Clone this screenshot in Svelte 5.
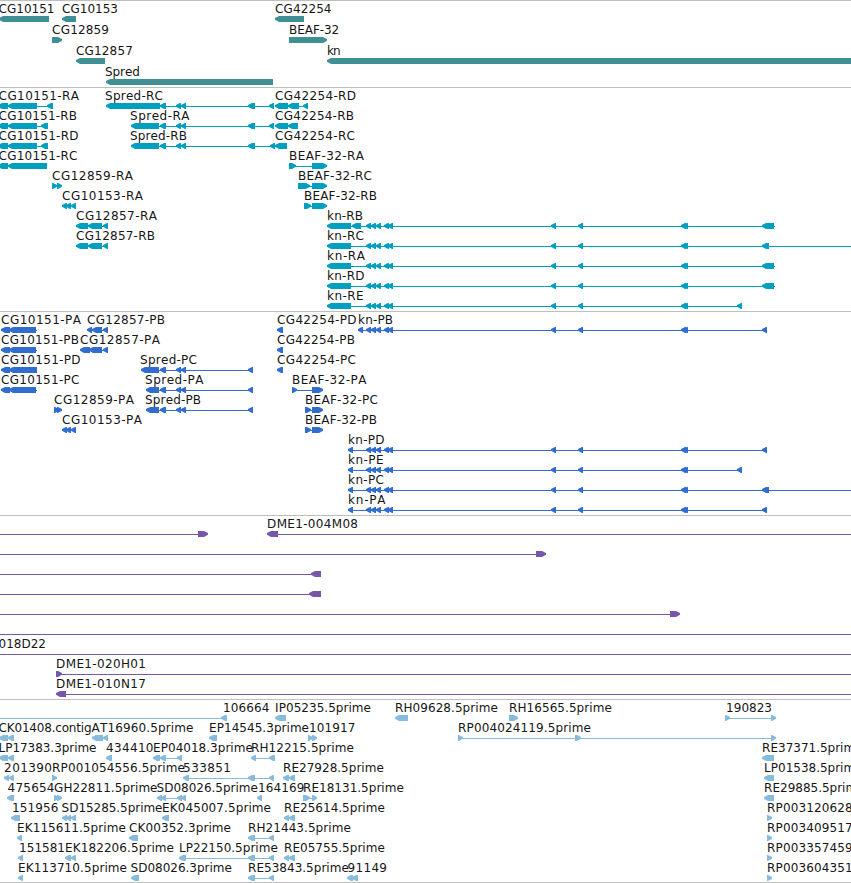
<script>
  // Label: [text, left, right]. Box: [left, right]. Dir: -1 points left, 1 points right.
  const item = (row, label, dir, boxes, line) => ({ row, label, dir, boxes, line });

  const pair = [[176, 181], [181, 186]];
  const cluster = [[366, 371], [371, 376], [376, 381], [384, 389], [388, 393]];
  const far = [[551, 556], [578, 583], [681, 686], [683, 688]];
  const tri = [[62, 67], [66, 71], [71, 76]];

  const genes = [
    item(0, ['CG10151', -1, 54], -1, [[-1, 49]]),
    item(0, ['CG10153', 62.5, 117.5], -1, [[62, 76]]),
    item(0, ['CG42254', 275.5, 331], -1, [[275, 304]]),
    item(1, ['CG12859', 52.5, 108.5], 1, [[52, 62]]),
    item(1, ['BEAF-32', 289.5, 338.7], 1, [[289, 327]]),
    item(2, ['CG12857', 76.5, 132.3], -1, [[76, 105]]),
    item(2, ['kn', 327.5, 340], -1, [[327, 860]]),
    item(3, ['Spred', 105.5, 139.3], -1, [[106, 273]])
  ];

  const knR = (row, name, end, last, lineEnd, extra = []) =>
    item(row, [name, 327.5, end], -1, [[327, 351], ...extra, ...cluster, ...far, last], [340, lineEnd]);

  const transcripts = [
    item(0, ['CG10151-RA', -1, 78.5], -1, [[-2, 8], [8, 37], [47, 53]], [0, 53]),
    item(0, ['Spred-RC', 105.5, 162.5], -1, [[106, 160], [160, 166], ...pair, [248, 255], [269, 274]], [150, 274]),
    item(0, ['CG42254-RD', 275.5, 355.5], -1, [[275, 288], [288, 299], [303, 308]], [280, 308]),
    item(1, ['CG10151-RB', -1, 76.5], -1, [[-2, 8], [8, 37], [41, 48]], [0, 48]),
    item(1, ['Spred-RA', 130.5, 189], -1, [[131, 159], [160, 166], ...pair, [248, 255], [269, 274]], [150, 274]),
    item(1, ['CG42254-RB', 275.5, 353.5], -1, [[275, 288], [288, 298]]),
    item(2, ['CG10151-RD', -1, 78], -1, [[-2, 8], [8, 37], [41, 48]], [0, 48]),
    item(2, ['Spred-RB', 130.5, 186.5], -1, [[131, 159], [160, 166], ...pair, [248, 255], [270, 275]], [150, 276]),
    item(2, ['CG42254-RC', 275.5, 354.5], -1, [[275, 287]]),
    item(3, ['CG10151-RC', -1, 77], -1, [[-2, 8], [8, 47]]),
    item(3, ['BEAF-32-RA', 289.5, 363.5], 1, [[289, 296], [312, 327]], [290, 320]),
    item(4, ['CG12859-RA', 52.5, 132.5], 1, [[52, 57], [57, 62]]),
    item(4, ['BEAF-32-RC', 298.5, 371.5], 1, [[298, 310], [312, 327]], [300, 320]),
    item(5, ['CG10153-RA', 62.5, 142.5], -1, tri),
    item(5, ['BEAF-32-RB', 304.5, 376.5], 1, [[304, 311], [312, 327]], [306, 320]),
    item(6, ['CG12857-RA', 76.5, 156.5], -1, [[76, 88], [88, 102], [103, 108]], [80, 107]),
    knR(6, 'kn-RB', 362.5, [762, 774], 775, [[352, 361]]),
    item(7, ['CG12857-RB', 76.5, 154.5], -1, [[76, 88], [88, 102], [103, 108]], [80, 107]),
    knR(7, 'kn-RC', 363.5, [762, 769], 860),
    knR(8, 'kn-RA', 364.5, [762, 774], 775),
    knR(9, 'kn-RD', 364, [762, 774], 775),
    knR(10, 'kn-RE', 363, [737, 742], 742)
  ];

  const knP = (row, name, end, last, lineEnd) =>
    item(row, [name, 348.5, end], -1, [[348, 353], ...cluster, ...far, last], [350, lineEnd]);

  const proteins = [
    item(0, ['CG10151-PA', 1.5, 80.5], -1, [[1, 10], [9, 36]], [5, 37]),
    item(0, ['CG12857-PB', 87.5, 164.5], -1, [[87, 92], [92, 102], [103, 108]], [90, 107]),
    item(0, ['CG42254-PD', 277.5, 356], -1, [[277, 283]]),
    item(0, ['kn-PB', 358.5, 392.5], -1, [[358, 363], ...cluster, ...far, [762, 767]], [360, 767]),
    item(1, ['CG10151-PB', 1.5, 78.5], -1, [[1, 10], [9, 36]], [5, 37]),
    item(1, ['CG12857-PA', 80.5, 159.5], -1, [[80, 90], [89, 102], [103, 108]], [84, 107]),
    item(1, ['CG42254-PB', 277.5, 354.5], -1, [[277, 283]]),
    item(2, ['CG10151-PD', 1.5, 80], -1, [[1, 10], [9, 37]], [5, 37]),
    item(2, ['Spred-PC', 140.5, 196.5], -1, [[141, 159], [160, 166], ...pair, [248, 253]], [150, 253]),
    item(2, ['CG42254-PC', 277.5, 355.5], -1, [[277, 283]]),
    item(3, ['CG10151-PC', 1.5, 79], -1, [[1, 10], [9, 36]], [5, 37]),
    item(3, ['Spred-PA', 145.5, 203], -1, [[146, 159], [160, 166], ...pair, [248, 253]], [150, 253]),
    item(3, ['BEAF-32-PA', 292.5, 366], 1, [[292, 297], [312, 323]], [293, 318]),
    item(4, ['CG12859-PA', 54.5, 133.5], 1, [[54, 59], [57, 62]]),
    item(4, ['Spred-PB', 145.5, 200.5], -1, [[146, 159], [160, 166], ...pair, [248, 253]], [150, 253]),
    item(4, ['BEAF-32-PC', 305.5, 377.5], 1, [[305, 311], [312, 323]], [306, 318]),
    item(5, ['CG10153-PA', 62.5, 141.5], -1, tri),
    item(5, ['BEAF-32-PB', 305.5, 376.5], 1, [[305, 311], [312, 323]], [306, 318]),
    knP(6, 'kn-PD', 384, [762, 767], 767),
    knP(7, 'kn-PE', 383, [737, 742], 742),
    knP(8, 'kn-PC', 383.5, [762, 769], 860),
    knP(9, 'kn-PA', 385, [762, 767], 767)
  ];

  const clones = [
    item(0, null, 1, [[198, 208]], [0, 200]),
    item(0, ['DME1-004M08', 267.5, 357.5], -1, [[267, 278]], [275, 860]),
    item(1, null, 1, [[536, 546]], [0, 538]),
    item(2, null, -1, [[311, 321]], [0, 320]),
    item(3, null, -1, [[309, 321]], [0, 320]),
    item(4, null, 1, [[670, 680]], [0, 672]),
    item(5, null, 1, [], [0, 860]),
    item(6, ['018D22', -1, 45.5], 1, [], [0, 860]),
    item(7, ['DME1-020H01', 56.5, 145.5], 1, [[56, 62]], [57, 860]),
    item(8, ['DME1-010N17', 56.5, 145.5], -1, [[56, 66]], [60, 860])
  ];

  const ests = [
    item(0, ['106664', 223.5, 269], -1, [[221, 227]], [0, 226]),
    item(0, ['IP05235.5prime', 275.5, 370.5], -1, [[275, 286]]),
    item(0, ['RH09628.5prime', 395.5, 497.3], -1, [[395, 408]]),
    item(0, ['RH16565.5prime', 509.5, 611.3], 1, [[509, 518]]),
    item(0, ['190823', 726.5, 771.5], 1, [[725, 730], [771, 776]], [726, 774]),
    item(1, ['CK01408.contig', -1, 91], -1, [[-1, 8], [8, 14]]),
    item(1, ['AT16960.5prime', 92, 193], -1, [[92, 103], [103, 108]]),
    item(1, ['EP14545.3prime', 209.5, 308.5], -1, [[209, 217]]),
    item(1, ['101917', 309.5, 355], 1, [[308, 313], [312, 317]]),
    item(1, ['RP004024119.5prime', 458.5, 590.5], 1, [[458, 463], [575, 581], [771, 776]], [459, 774]),
    item(2, ['LP17383.3prime', -1, 96], -1, [[-1, 8], [8, 14]]),
    item(2, ['434410', 106.5, 153], -1, [[106, 112]]),
    item(2, ['EP04018.3prime', 153.5, 252.3], -1, [[153, 160], [160, 166], [177, 182]], [155, 182]),
    item(2, ['RH12215.5prime', 251.5, 353.3], -1, [[251, 256], [269, 275]], [253, 274]),
    item(2, ['RE37371.5prime', 762.5, 862], -1, [[762, 774]]),
    item(3, ['201390', 4.5, 51.5], -1, [[4, 9], [9, 14]]),
    item(3, ['RP001054556.5prime', 52.5, 184.5], 1, [[52, 57]]),
    item(3, ['533851', 183.5, 230.5], -1, [[183, 189], [248, 255], [269, 274]], [185, 274]),
    item(3, ['RE27928.5prime', 283.5, 383.3], -1, [[283, 289], [289, 295]]),
    item(3, ['LP01538.5prime', 764.5, 862], -1, [[764, 774]]),
    item(4, ['475654', 8, 54], -1, [[7, 14]]),
    item(4, ['GH22811.5prime', 54.5, 157], 1, [[54, 59], [57, 62]]),
    item(4, ['SD08026.5prime', 157, 257.3], -1, [[157, 162], [161, 166], [177, 182], [181, 186]], [159, 185]),
    item(4, ['164169', 258.5, 304], -1, [[257, 262]]),
    item(4, ['RE18131.5prime', 303.5, 403.3], 1, [[303, 310], [312, 317]], [304, 315]),
    item(4, ['RE29885.5prime', 764.5, 864], -1, [[764, 774]]),
    item(5, ['151956', 12.5, 58], -1, [[11, 20]]),
    item(5, ['SD15285.5prime', 62, 162], -1, tri),
    item(5, ['EK045007.5prime', 162.5, 270.5], -1, [[162, 169]]),
    item(5, ['RE25614.5prime', 284.5, 384.3], -1, [[284, 289], [289, 295]]),
    item(5, ['RP003120628.5prime', 767.5, 899.5], 1, [[767, 772]]),
    item(6, ['EK115611.5prime', 17.5, 125.3], -1, [[17, 22]]),
    item(6, ['CK00352.3prime', 129.5, 230.5], -1, [[129, 138]]),
    item(6, ['RH21443.5prime', 248.5, 350.3], -1, [[248, 255], [269, 274]], [250, 274]),
    item(6, ['RP003409517.5prime', 767.5, 899.5], 1, [[767, 772]]),
    item(7, ['151581', 19.5, 64.5], -1, [[18, 23]]),
    item(7, ['EK182206.5prime', 65.5, 173.5], -1, [[65, 71], [71, 76]]),
    item(7, ['LP22150.5prime', 179.5, 277.3], -1, [[179, 186], [248, 255], [269, 274]], [182, 274]),
    item(7, ['RE05755.5prime', 284.5, 384.3], -1, [[284, 289], [289, 295]]),
    item(7, ['RP003357459.5prime', 767.5, 899.5], 1, [[767, 772]]),
    item(8, ['EK113710.5prime', 18.5, 126.5], -1, [[18, 23]]),
    item(8, ['SD08026.3prime', 131, 231.3], -1, [[131, 139]]),
    item(8, ['RE53843.5prime', 248.5, 348.3], -1, [[248, 255], [269, 274]], [250, 274]),
    item(8, ['91149', 348, 386.5], -1, [[347, 353], [352, 358]]),
    item(8, ['RP003604351.5prime', 767.5, 899.5], 1, [[767, 772]])
  ];

  const tracks = [
    { name: 'genes', height: 86, pitch: 21, items: genes },
    { name: 'transcripts', height: 223, pitch: 20, items: transcripts },
    { name: 'proteins', height: 203, pitch: 20, items: proteins },
    { name: 'clones', height: 183, pitch: 20, items: clones },
    { name: 'ests', height: 182, pitch: 20, items: ests }
  ];

  // Block six pixels tall with a tapered head at the pointed end.
  function arrow([a, b], dir, y) {
    const tip = dir < 0 ? a : b;
    const tail = dir < 0 ? b : a;
    const s = -dir;
    return `${tip},${y + 2} ${tip + s * 4},${y} ${tail},${y} ${tail},${y + 6} ${tip + s * 4},${y + 6} ${tip},${y + 3.8}`;
  }
</script>

<main>
  {#each tracks as track}
    <section class={track.name}>
      <svg width="851" height={track.height}>
        {#each track.items as f}
          {@const y = f.row * track.pitch}
          {#if f.line}
            <rect x={f.line[0]} y={y + 18} width={f.line[1] - f.line[0]} height="1" />
          {/if}
          {#each f.boxes as box}
            <polygon points={arrow(box, f.dir, y + 15)} />
          {/each}
        {/each}
        {#each track.items as f}
          {#if f.label}
            <text x={f.label[1] - 0.4} y={f.row * track.pitch + 12} textLength={f.label[2] - f.label[1] + 0.9}>{f.label[0]}</text>
          {/if}
        {/each}
      </svg>
    </section>
  {/each}
</main>

<style>
  :global(body) {
    margin: 0;
    background: #fff;
  }
  main {
    display: flex;
    flex-direction: column;
    width: 851px;
    height: 883px;
    box-sizing: border-box;
    overflow: hidden;
    border-bottom: 1px solid #bebebe;
    background: #fff;
  }
  section {
    border-top: 1px solid #bebebe;
  }
  svg {
    display: block;
    overflow: hidden;
  }
  text {
    fill: #161616;
    font: 12px "DejaVu Sans", sans-serif;
    font-kerning: none;
  }
  .genes { fill: #3f8f95; }
  .transcripts { fill: #009fc0; }
  .proteins { fill: #306dcf; }
  .clones { fill: #7757a7; }
  .ests { fill: #87bbdc; }
</style>
